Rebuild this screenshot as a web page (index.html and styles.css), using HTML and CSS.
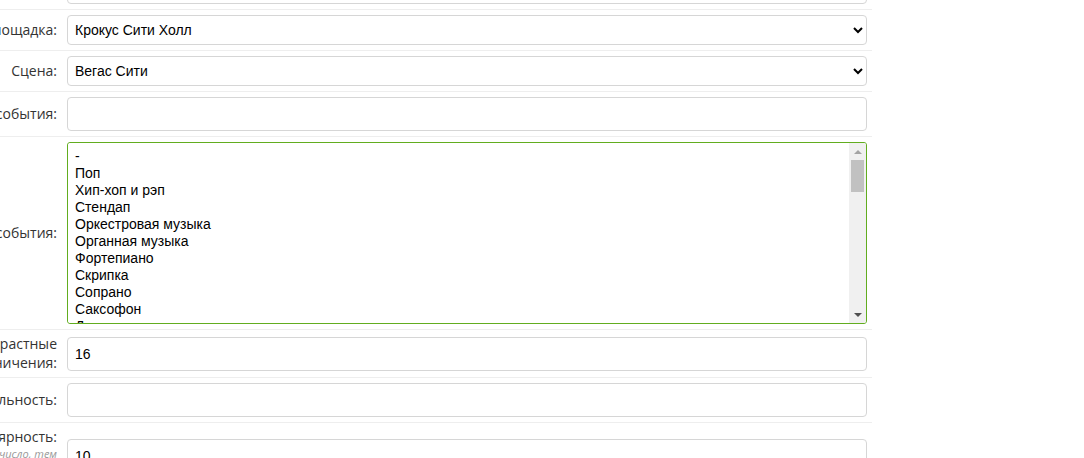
FILE: index.html
```html
<!DOCTYPE html>
<html lang="ru">
<head>
  <meta charset="UTF-8" />
  <meta name="viewport" content="width=device-width, initial-scale=1.0"/>
  <title>Событие</title>
  <link rel="stylesheet" href="styles.css">
</head>
<body>

  <form class="event-form">

    <div class="form-row">
      <label class="row-label" for="date">Дата события:</label>
      <input class="field" type="text" id="date" value="" />
    </div>

    <div class="form-row">
      <label class="row-label" for="place">Площадка:</label>
      <select class="field field-select" id="place">
        <option>Крокус Сити Холл</option>
        <option>Лужники</option>
        <option>ВТБ Арена</option>
      </select>
    </div>

    <div class="form-row">
      <label class="row-label" for="stage">Сцена:</label>
      <select class="field field-select" id="stage">
        <option>Вегас Сити</option>
        <option>Главная сцена</option>
      </select>
    </div>

    <div class="form-row">
      <label class="row-label" for="title">Название события:</label>
      <input class="field" type="text" id="title" value="" />
    </div>

    <div class="form-row">
      <label class="row-label" for="genres">Жанры события:</label>
      <div class="multi-box">
        <select class="multi-list" id="genres" multiple>
          <option>-</option>
          <option>Поп</option>
          <option>Хип-хоп и рэп</option>
          <option>Стендап</option>
          <option>Оркестровая музыка</option>
          <option>Органная музыка</option>
          <option>Фортепиано</option>
          <option>Скрипка</option>
          <option>Сопрано</option>
          <option>Саксофон</option>
          <option>Джаз</option>
          <option>Рок</option>
          <option>Метал</option>
          <option>Панк</option>
          <option>Инди</option>
          <option>Электронная музыка</option>
          <option>Техно</option>
          <option>Хаус</option>
          <option>Шансон</option>
          <option>Романсы</option>
          <option>Эстрада</option>
          <option>Фолк</option>
          <option>Блюз</option>
          <option>Кантри</option>
          <option>Регги</option>
          <option>Опера</option>
          <option>Балет</option>
          <option>Мюзикл</option>
          <option>Драма</option>
          <option>Комедия</option>
          <option>Спектакль для детей</option>
          <option>Цирк</option>
          <option>Шоу</option>
          <option>Лекция</option>
          <option>Мастер-класс</option>
          <option>Фестиваль</option>
          <option>Выставка</option>
          <option>Кино</option>
          <option>Спорт</option>
          <option>Хоккей</option>
          <option>Футбол</option>
          <option>Баскетбол</option>
          <option>Единоборства</option>
          <option>Танцы</option>
          <option>Квиз</option>
          <option>Вечеринка</option>
          <option>Экскурсия</option>
          <option>Другое</option>
        </select>
        <div class="scrollbar">
          <span class="sb-btn"><span class="arrow-up"></span></span>
          <span class="sb-track"><span class="sb-thumb"></span></span>
          <span class="sb-btn"><span class="arrow-down"></span></span>
        </div>
      </div>
    </div>

    <div class="form-row">
      <label class="row-label" for="age">Возрастные ограничения:</label>
      <input class="field" type="text" id="age" value="16" />
    </div>

    <div class="form-row">
      <label class="row-label" for="duration">Длительность:</label>
      <input class="field" type="text" id="duration" value="" />
    </div>

    <div class="form-row">
      <div class="row-label">
        <label for="rating">Популярность:</label>
        <p class="help">Чем больше число, тем<br>выше событие<br>в списке</p>
      </div>
      <input class="field" type="text" id="rating" value="10" />
    </div>

  </form>

</body>
</html>
```

FILE: styles.css
```css
body {
  margin: 0;
  background-color: #fff;
  overflow: hidden;
}

.event-form {
  width: 975px;
  margin-top: -35px;
  margin-left: -103px;
}

.form-row {
  display: flex;
  align-items: center;
  gap: 10px;
  padding: 5px 5px 5px 0;
  border-bottom: 1px solid #eee;
}

.row-label {
  flex: 0 0 160px;
  text-align: right;
  font-family: "Open Sans", sans-serif;
  font-size: 14px;
  line-height: 18.5px;
  color: #333;
}

.help {
  margin: 1px 0 0;
  font-size: 11px;
  font-style: italic;
  line-height: 12px;
  color: #999;
}

.field {
  flex: 0 0 800px;
  box-sizing: border-box;
  height: 34px;
  padding: 0 7px;
  border: 1px solid #d6d6d6;
  border-radius: 4px;
  background-color: #fff;
  font-family: "Liberation Sans", Arial, sans-serif;
  font-size: 14px;
  color: #000;
}

.field-select {
  height: 30px;
  padding: 0 3px;
}

/* multiple select with a drawn scrollbar */
.multi-box {
  flex: 0 0 800px;
  box-sizing: border-box;
  height: 182px;
  display: flex;
  border: 1px solid #62ad1f;
  border-radius: 3px;
  overflow: hidden;
}

.multi-list {
  flex: 1;
  height: 100%;
  padding: 5px 0 4px 5px;
  border: none;
  outline: none;
  overflow: hidden;
  background-color: #fff;
  font-family: "Liberation Sans", Arial, sans-serif;
  font-size: 14px;
  color: #000;
}

.multi-list option {
  min-block-size: 0;
  padding: 0 2px 1px;
}

.scrollbar {
  flex: 0 0 17px;
  display: flex;
  flex-direction: column;
  background-color: #f0f0f0;
}

.sb-btn {
  flex: 0 0 17px;
  display: flex;
  align-items: center;
  justify-content: center;
}

.sb-track {
  flex: 1;
  padding: 0 2px;
}

.sb-thumb {
  display: block;
  height: 32px;
  background-color: #c1c1c1;
}

.arrow-up {
  border-left: 4px solid transparent;
  border-right: 4px solid transparent;
  border-bottom: 4px solid #a3a3a3;
}

.arrow-down {
  border-left: 4px solid transparent;
  border-right: 4px solid transparent;
  border-top: 4px solid #505050;
}
```
